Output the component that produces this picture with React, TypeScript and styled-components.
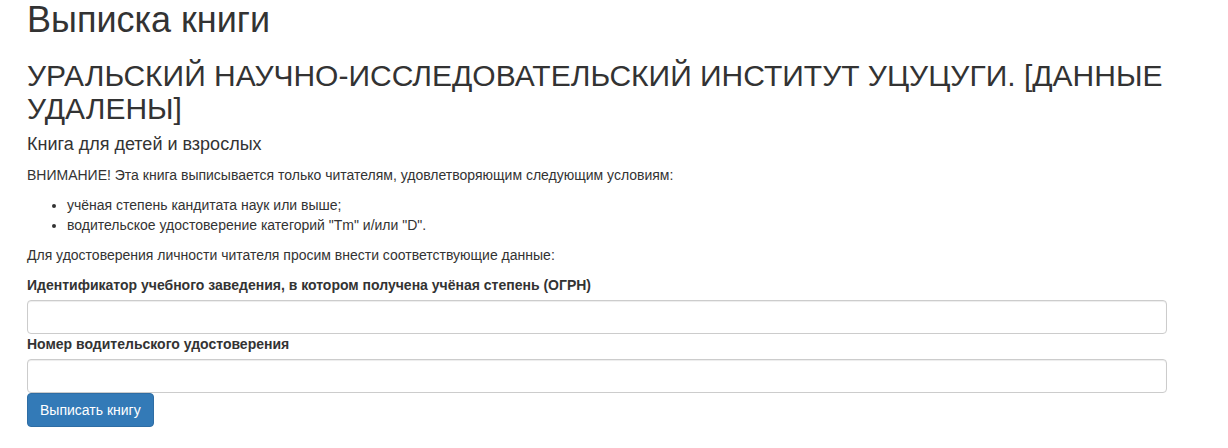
import React from "react";
import styled, { createGlobalStyle } from "styled-components";

const GlobalStyle = createGlobalStyle`
  html, body {
    margin: 0;
    padding: 0;
    background: #fff;
  }
  body {
    font-family: "Liberation Sans", Arial, sans-serif;
    font-size: 14px;
    line-height: 1.42857143;
    color: #333;
  }
  * { box-sizing: border-box; }
`;

const Container = styled.div`
  width: 1140px;
  margin-left: 27px;
`;

const Title = styled.h1`
  font-size: 36px;
  font-weight: 500;
  line-height: 1.1;
  margin: 0 0 19px;
`;

const Org = styled.h2`
  font-size: 30px;
  font-weight: 500;
  line-height: 1.1;
  margin: 0 0 10px;
`;

const Subtitle = styled.h4`
  font-size: 18px;
  font-weight: 500;
  line-height: 1.1;
  margin: 10px 0 11px;
`;

const Paragraph = styled.p`
  margin: 0 0 10px;
`;

const List = styled.ul`
  margin: 0 0 10px;
  padding-left: 40px;
`;

const Form = styled.form`
  display: flex;
  flex-direction: column;
  align-items: flex-start;
`;

const Label = styled.label`
  display: block;
  font-weight: 700;
  margin-bottom: 5px;
`;

const Input = styled.input`
  display: block;
  width: 100%;
  height: 34px;
  padding: 6px 12px;
  font-size: 14px;
  font-family: inherit;
  color: #555;
  background: #fff;
  border: 1px solid #ccc;
  border-radius: 4px;
  box-shadow: inset 0 1px 1px rgba(0, 0, 0, 0.075);
  outline: none;
`;

const Button = styled.button`
  display: inline-block;
  height: 34px;
  padding: 6px 12px;
  font-size: 14px;
  font-family: inherit;
  line-height: 1.42857143;
  color: #fff;
  background: #337ab7;
  border: 1px solid #2e6da4;
  border-radius: 4px;
  cursor: pointer;
`;

export default function App() {
  return (
    <>
      <GlobalStyle />
      <Container>
        <Title>Выписка книги</Title>
        <Org>УРАЛЬСКИЙ НАУЧНО-ИССЛЕДОВАТЕЛЬСКИЙ ИНСТИТУТ УЦУЦУГИ. [ДАННЫЕ УДАЛЕНЫ]</Org>
        <Subtitle>Книга для детей и взрослых</Subtitle>
        <Paragraph>
          ВНИМАНИЕ! Эта книга выписывается только читателям, удовлетворяющим следующим условиям:
        </Paragraph>
        <List>
          <li>учёная степень кандитата наук или выше;</li>
          <li>водительское удостоверение категорий "Tm" и/или "D".</li>
        </List>
        <Paragraph>Для удостоверения личности читателя просим внести соответствующие данные:</Paragraph>
        <Form onSubmit={(e) => e.preventDefault()}>
          <Label htmlFor="ogrn">
            Идентификатор учебного заведения, в котором получена учёная степень (ОГРН)
          </Label>
          <Input id="ogrn" type="text" />
          <Label htmlFor="license">Номер водительского удостоверения</Label>
          <Input id="license" type="text" />
          <Button type="submit">Выписать книгу</Button>
        </Form>
      </Container>
    </>
  );
}
